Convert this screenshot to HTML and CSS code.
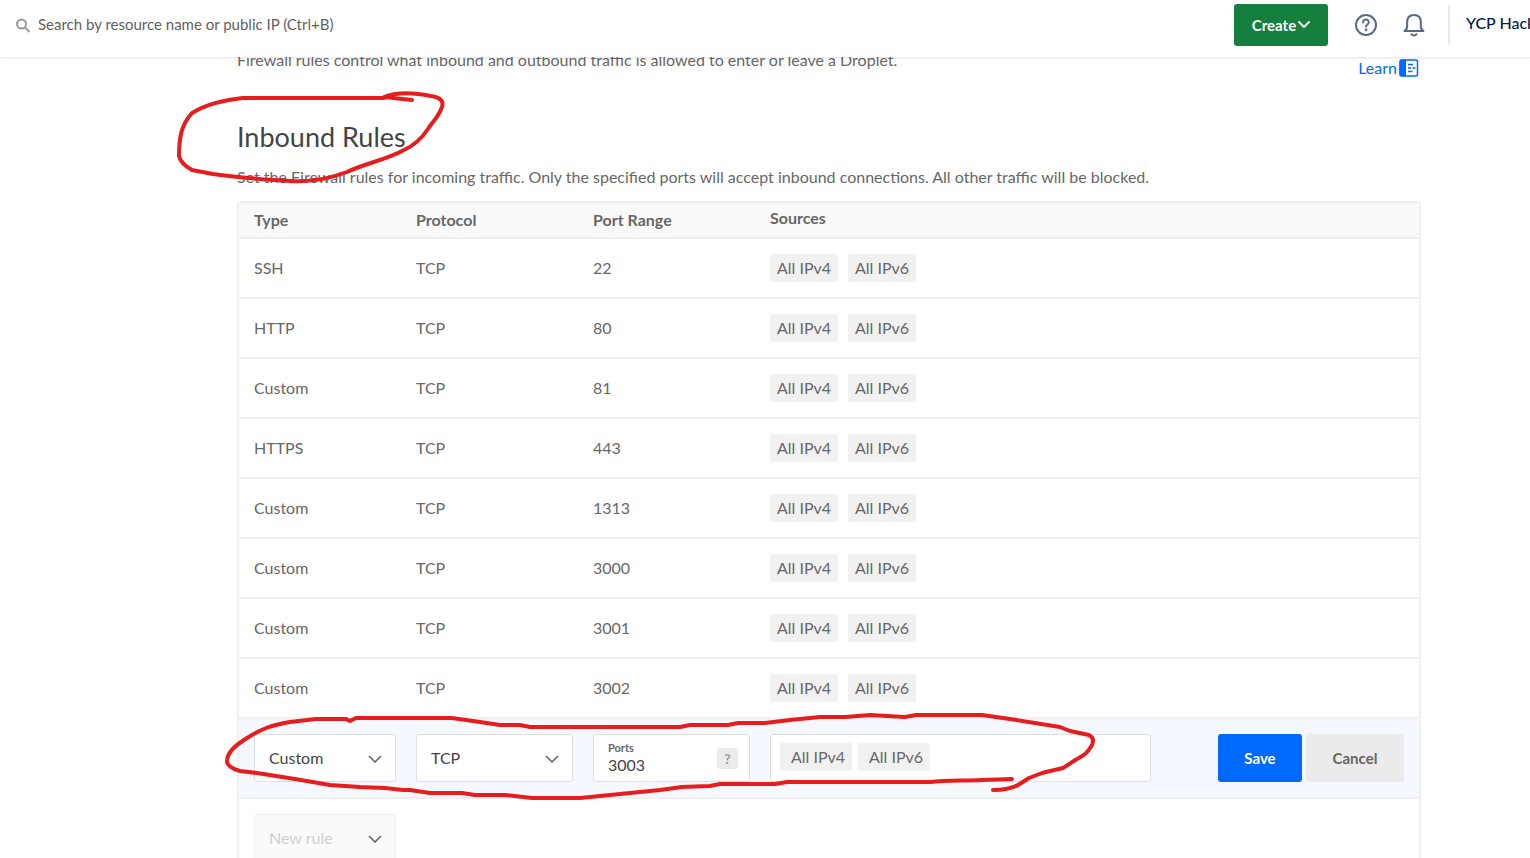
FILE: index.html
```html
<!DOCTYPE html>
<html lang="en">
<head>
<meta charset="utf-8">
<title>Firewall rules</title>
<link rel="stylesheet" href="styles.css">
</head>
<body>
<header class="topbar">
  <label class="search">
    <svg class="search-icon" width="16" height="16" viewBox="0 0 16 16" fill="none" stroke="#999" stroke-width="2" aria-hidden="true"><circle cx="5.500" cy="6" r="4.500"/><path d="M8.500 9l5 5"/></svg>
    <input class="search-input" type="text" aria-label="Search" placeholder="Search by resource name or public IP (Ctrl+B)">
  </label>
  <button class="btn create" type="button">Create
    <svg width="12" height="8" viewBox="0 0 12 8" fill="none" stroke="#fff" stroke-width="1.800" stroke-linecap="round" stroke-linejoin="round" aria-hidden="true"><path d="M1 1l5 5 5-5"/></svg>
  </button>
  <button class="icon-btn" type="button" aria-label="Help">
    <svg width="24" height="24" viewBox="0 0 24 24" fill="none" stroke="#5b6987" stroke-width="2" stroke-linecap="round" aria-hidden="true"><circle cx="12" cy="12" r="10"/><path d="M9 9.500c.1-4 6-3.700 5.800 0-.1 1.900-2.800 2-2.800 4"/><circle cx="12" cy="16.800" r=".5"/></svg>
  </button>
  <button class="icon-btn" type="button" aria-label="Notifications">
    <svg width="24" height="24" viewBox="0 0 24 24" fill="none" stroke="#5b6987" stroke-width="2" stroke-linecap="round" stroke-linejoin="round" aria-hidden="true"><path d="M2.500 18c1.800-1 2.700-2 2.700-5V9c0-4.500 2.700-7 6.800-7s6.800 2.500 6.800 7v4c0 3 .9 4 2.700 5z"/><path d="M9.500 21.200c1.100 1.700 3.900 1.700 5 0"/></svg>
  </button>
  <div class="team">YCP Hacks</div>
</header>

<main class="content">
  <div class="intro">
    <p class="text">Firewall rules control what inbound and outbound traffic is allowed to enter or leave a Droplet.</p>
    <a class="learn" href="#">Learn
      <svg width="20" height="18" viewBox="0 0 20 18" fill="none" stroke="#0069ff" stroke-width="1.500" aria-hidden="true"><rect x="1" y="1" width="17.500" height="16" rx="2"/><path d="M.5 3q0-2.500 2.500-2.500h4v17H3q-2.500 0-2.500-2.500z" fill="#0069ff" stroke="none"/><path d="M9 5.500h5M9 9h3M13.500 9h3M9 12.500h4.500"/></svg>
    </a>
  </div>
  <h2 class="title">Inbound Rules</h2>
  <p class="text">Set the Firewall rules for incoming traffic. Only the specified ports will accept inbound connections. All other traffic will be blocked.</p>

  <table class="rules">
    <colgroup><col class="c-type"><col class="c-mid"><col class="c-mid"><col class="c-src"><col></colgroup>
    <thead>
      <tr><th>Type</th><th>Protocol</th><th>Port Range</th><th class="th-src">Sources</th><th></th></tr>
    </thead>
    <tbody>
      <tr><td>SSH</td><td>TCP</td><td>22</td><td colspan="2"><div class="tags"><span class="tag">All IPv4</span><span class="tag">All IPv6</span></div></td></tr>
      <tr><td>HTTP</td><td>TCP</td><td>80</td><td colspan="2"><div class="tags"><span class="tag">All IPv4</span><span class="tag">All IPv6</span></div></td></tr>
      <tr><td>Custom</td><td>TCP</td><td>81</td><td colspan="2"><div class="tags"><span class="tag">All IPv4</span><span class="tag">All IPv6</span></div></td></tr>
      <tr><td>HTTPS</td><td>TCP</td><td>443</td><td colspan="2"><div class="tags"><span class="tag">All IPv4</span><span class="tag">All IPv6</span></div></td></tr>
      <tr><td>Custom</td><td>TCP</td><td>1313</td><td colspan="2"><div class="tags"><span class="tag">All IPv4</span><span class="tag">All IPv6</span></div></td></tr>
      <tr><td>Custom</td><td>TCP</td><td>3000</td><td colspan="2"><div class="tags"><span class="tag">All IPv4</span><span class="tag">All IPv6</span></div></td></tr>
      <tr><td>Custom</td><td>TCP</td><td>3001</td><td colspan="2"><div class="tags"><span class="tag">All IPv4</span><span class="tag">All IPv6</span></div></td></tr>
      <tr><td>Custom</td><td>TCP</td><td>3002</td><td colspan="2"><div class="tags"><span class="tag">All IPv4</span><span class="tag">All IPv6</span></div></td></tr>
      <tr class="editing">
        <td><div class="field"><select class="select" aria-label="Type"><option>Custom</option></select><svg class="chevron" width="14" height="8" viewBox="0 0 14 8" aria-hidden="true"><path d="M1 1l6 6 6-6"/></svg></div></td>
        <td><div class="field"><select class="select" aria-label="Protocol"><option>TCP</option></select><svg class="chevron" width="14" height="8" viewBox="0 0 14 8" aria-hidden="true"><path d="M1 1l6 6 6-6"/></svg></div></td>
        <td><div class="field ports"><div class="ports-main"><label class="ports-label" for="ports">Ports</label><input class="ports-input" id="ports" type="text" value="3003"></div><button class="hint" type="button">?</button></div></td>
        <td><div class="field sources"><span class="tag tag-edit">All IPv4</span><span class="tag tag-edit">All IPv6</span></div></td>
        <td><div class="actions"><button class="btn save" type="button">Save</button><button class="btn cancel" type="button">Cancel</button></div></td>
      </tr>
      <tr>
        <td><div class="field new-rule"><select class="select" aria-label="New rule"><option>New rule</option></select><svg class="chevron" width="14" height="8" viewBox="0 0 14 8" aria-hidden="true"><path d="M1 1l6 6 6-6"/></svg></div></td>
        <td colspan="4"></td>
      </tr>
    </tbody>
  </table>
</main>

<svg class="marker" width="1530" height="858" viewBox="0 0 1530 858" aria-hidden="true">
  <path d="M412 100L384 97C394 93 410 92 431 96Q445 98 442 107C438 118 433 121 428 129C422 138 415 145 404 150C386 160 366 163 347 172Q318 183 290 181C261 180 237 177 213 174L192 170Q181 164 179 156C179 136 182 124 192 113C205 105 224 100 243 98H384"/>
  <path d="M1012 779L982 780C963 781 948 780 930 782H787L775 784H720L710 786L682 787L660 790L620 794L580 798H532L505 795H475L462 793H430L410 790H403L385 788L360 787L330 785L295 779L257 773L240 771Q226 767 227 760C228 751 236 745 244 740C260 729 272 725 290 722L316 719H346L350 721L356 718H452L480 722L500 725H520L530 727H680L690 725H728L738 723H765L790 720L820 717H845L870 715L905 717L916 715H982L1010 719L1060 727L1070 731L1089 735Q1095 738 1092 745C1088 752 1085 755 1077 759L1063 768L1042 773L1029 778L1018 785Q1009 790 993 790"/>
</svg>
</body>
</html>
```
FILE: styles.css
```css
* { box-sizing: border-box; }
body {
  margin: 0;
  height: 100vh;
  overflow: hidden;
  position: relative;
  background: #fff;
  color: #676767;
  font: 16px/24px Lato, "Open Sans", sans-serif;
}
button, input, select { font: inherit; color: inherit; margin: 0; }
button { cursor: pointer; }

.topbar {
  position: relative;
  z-index: 1;
  display: flex;
  align-items: center;
  height: 57px;
  padding: 0 0 8px 16px;
  background: #fff;
  box-shadow: 0 1px 3px rgba(0, 0, 0, .12);
  white-space: nowrap;
  overflow-x: clip;
}
.search { display: flex; align-items: center; flex: 1; gap: 6px; }
.search-icon { margin-top: 2px; }
.search-input { flex: 1; height: 24px; margin-bottom: 2px; border: 0; padding: 0; outline: 0; background: none; font-size: 15px; }
.search-input::placeholder { color: #5f5f5f; opacity: 1; }
.btn { border: 0; border-radius: 3px; padding: 0; font-size: 15px; font-weight: 700; }
.create {
  display: flex;
  align-items: center;
  justify-content: center;
  gap: 2px;
  width: 94px;
  height: 42px;
  background: #15803d;
  color: #fff;
}
.icon-btn { display: flex; border: 0; padding: 0; margin-left: 24px; background: none; }
.create + .icon-btn { margin-left: 26px; }
.team {
  width: 82px;
  height: 39px;
  margin-left: 22px;
  padding-left: 16px;
  border-left: 2px solid #e8e8e8;
  color: #031b4e;
  font-weight: 500;
  line-height: 36px;
}

.content { padding: 0 109px 0 237px; }
.intro { display: flex; justify-content: space-between; margin-top: -9px; }
.text { margin: 0; }
.learn { display: flex; align-items: center; gap: 2px; margin: 8px 2px 0 0; color: #0069ff; text-decoration: none; }
.title { margin: 41px 0 12px; color: #444; font-size: 27px; line-height: 32px; font-weight: 400; }

.rules {
  width: 100%;
  margin-top: 12px;
  table-layout: fixed;
  border: 2px solid #f0f0f0;
  border-radius: 4px;
  border-spacing: 0;
}
.c-type { width: 162px; }
.c-mid { width: 177px; }
.c-src { width: 412px; }
.rules th, .rules td { padding: 0 0 0 15px; border-bottom: 2px solid #f0f0f0; text-align: left; }
.rules th { height: 36px; background: #fafafa; font-weight: 700; }
.rules .th-src { padding-bottom: 4px; }
.rules td { height: 60px; }
.tags { display: flex; gap: 10px; }
.tag { width: 68px; height: 28px; border-radius: 3px; background: #f1f1f1; line-height: 28px; text-align: center; }
.rules .editing td { height: 80px; background: #f5f8ff; }
.rules tr:last-child td { height: 80px; }

.field {
  position: relative;
  display: flex;
  height: 48px;
  margin-right: 5px;
  border: 1px solid #dfdfdf;
  border-radius: 3px;
  background: #fff;
  color: #444;
}
.select { width: 100%; border: 0; padding: 0 14px; background: none; appearance: none; outline: 0; }
.chevron {
  position: absolute;
  right: 13px;
  top: 20px;
  fill: none;
  stroke: #5f5f5f;
  stroke-width: 1.500;
  pointer-events: none;
}
.ports { align-items: center; justify-content: space-between; padding: 0 11px 0 14px; }
.ports-main { display: flex; flex-direction: column; }
.ports-label { color: #676767; font-size: 11px; font-weight: 700; line-height: 14px; }
.ports-input { width: 80px; height: 20px; border: 0; padding: 0; background: none; outline: 0; }
.hint { width: 21px; height: 21px; border: 0; border-radius: 3px; padding: 0; background: #ebebeb; color: #999; font-size: 14px; font-weight: 700; line-height: 21px; }
.sources { gap: 6px; margin-right: 16px; padding: 8px 9px; }
.tag-edit { width: 72px; padding-left: 4px; color: #676767; }
.actions { display: flex; justify-content: flex-end; gap: 4px; padding-right: 15px; }
.save { width: 84px; height: 48px; background: #0069ff; color: #fff; }
.cancel { width: 98px; height: 48px; background: #ebebeb; color: #676767; }
.new-rule { border-color: #f0f0f0; background: #fafafa; color: #d0d0d0; }

.marker {
  position: absolute;
  z-index: 2;
  left: 0;
  top: 0;
  fill: none;
  stroke: #e71d1d;
  stroke-width: 4;
  stroke-linecap: round;
  stroke-linejoin: round;
  pointer-events: none;
}
```
